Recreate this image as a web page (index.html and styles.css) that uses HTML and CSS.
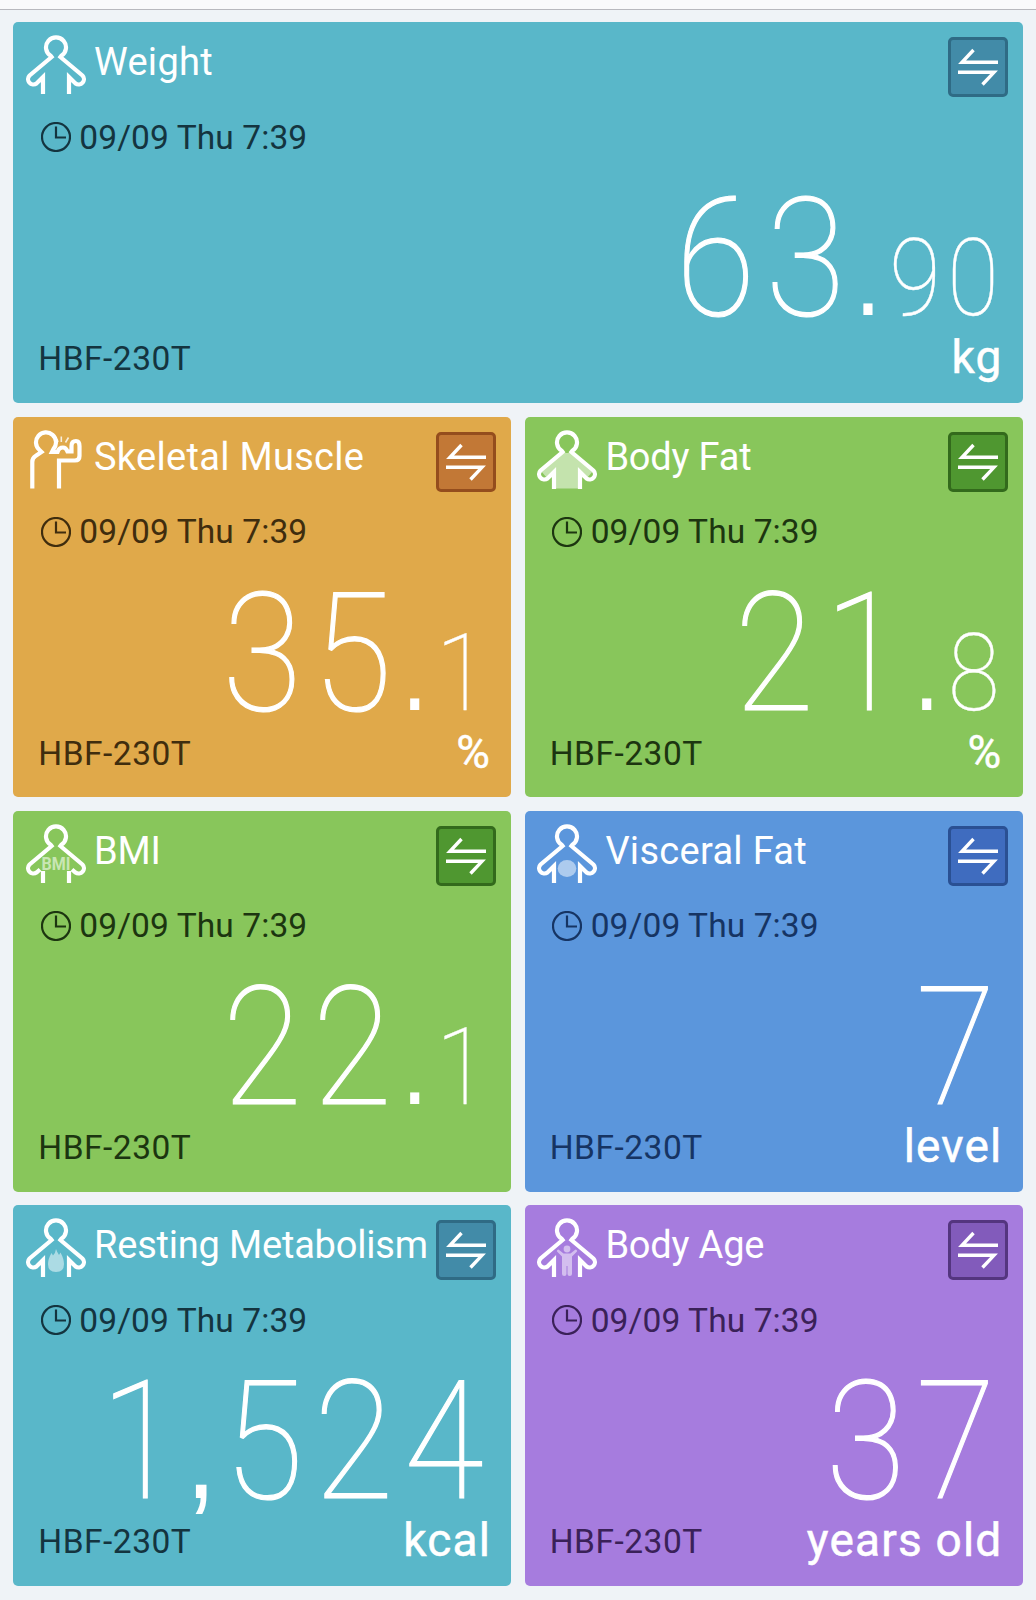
FILE: index.html
```html
<!DOCTYPE html>
<html lang="en">
<head>
    <meta charset="UTF-8">
    <meta name="viewport" content="width=device-width, initial-scale=1.0">
    <title>Body Composition</title>
    <link rel="stylesheet" href="styles.css">
</head>
<body>

    <!-- Shared icons -->
    <svg class="sprite" width="0" height="0">
        <symbol id="person" viewBox="0 0 60 60">
            <path d="M17 59V42L10.5 48.5A5.300 5.300 0 0 1 3.600 40.500L25.600 22L24.700 20.800A10 10 0 1 1 35.300 20.800L34.400 22L56.400 40.500A5.300 5.300 0 0 1 49.500 48.500L43 42V59"/>
        </symbol>
        <symbol id="swap" viewBox="0 0 60 60">
            <path d="M50 25.300H14L25.500 13M10 35.300H46L34.500 47.500"/>
        </symbol>
        <symbol id="clock" viewBox="0 0 30 30">
            <circle cx="15" cy="15" r="14"/>
            <path d="M15 4.500V15.500H25"/>
        </symbol>
    </svg>

    <div class="topbar"></div>

    <div class="cards">
        <!-- Weight -->
        <div class="card wide teal">
            <div class="head">
                <svg class="icon"><use href="#person"/></svg>
                <h2>Weight</h2>
                <button class="swap"><svg><use href="#swap"/></svg></button>
            </div>
            <div class="date"><svg><use href="#clock"/></svg><span>09/09 Thu 7:39</span></div>
            <div class="value">63<span class="dot">.</span><small>90</small></div>
            <div class="foot"><span class="device">HBF-230T</span><span class="unit">kg</span></div>
        </div>

        <!-- Skeletal Muscle -->
        <div class="card orange">
            <div class="head">
                <svg class="icon" viewBox="0 0 60 60">
                    <path d="M6.300 58.500V32Q6.300 28 9.500 26L15.500 22L13.500 20A10 10 0 1 1 27.500 19L26 22H31.500Q33 17.500 37 17.500Q40 17.500 41.500 21.500H45.500V16Q45.500 11 50 11Q53.500 11 53.500 16V26Q53.500 30.500 49 30.500H33V58.500"/>
                    <path class="spark" d="M35.300 6.500V12M42.500 7.500L39.500 12.500M31 9L32 12"/>
                </svg>
                <h2>Skeletal Muscle</h2>
                <button class="swap"><svg><use href="#swap"/></svg></button>
            </div>
            <div class="date"><svg><use href="#clock"/></svg><span>09/09 Thu 7:39</span></div>
            <div class="value">35<span class="dot">.</span><small>1</small></div>
            <div class="foot"><span class="device">HBF-230T</span><span class="unit">%</span></div>
        </div>

        <!-- Body Fat -->
        <div class="card green">
            <div class="head">
                <svg class="icon" viewBox="0 0 60 60">
                    <path class="tint" d="M25 23H35L56 41L50 48L43 42V58.500H17V42L10 48L4 41Z"/>
                    <use href="#person"/>
                </svg>
                <h2 class="tight">Body Fat</h2>
                <button class="swap"><svg><use href="#swap"/></svg></button>
            </div>
            <div class="date"><svg><use href="#clock"/></svg><span>09/09 Thu 7:39</span></div>
            <div class="value">21<span class="dot">.</span><small>8</small></div>
            <div class="foot"><span class="device">HBF-230T</span><span class="unit">%</span></div>
        </div>

        <!-- BMI -->
        <div class="card green">
            <div class="head">
                <svg class="icon" viewBox="0 0 60 60">
                    <path d="M14 45.500L10.500 48.500A5.300 5.300 0 0 1 3.600 40.500L25.600 22L24.700 20.800A10 10 0 1 1 35.300 20.800L34.400 22L56.400 40.500A5.300 5.300 0 0 1 49.500 48.500L46 45.500M17 47V59M43 47V59"/>
                    <text class="bmi" x="15.500" y="45.500" textLength="29" lengthAdjust="spacingAndGlyphs">BMI</text>
                </svg>
                <h2 class="tight">BMI</h2>
                <button class="swap"><svg><use href="#swap"/></svg></button>
            </div>
            <div class="date"><svg><use href="#clock"/></svg><span>09/09 Thu 7:39</span></div>
            <div class="value">22<span class="dot">.</span><small>1</small></div>
            <div class="foot"><span class="device">HBF-230T</span></div>
        </div>

        <!-- Visceral Fat -->
        <div class="card blue">
            <div class="head">
                <svg class="icon" viewBox="0 0 60 60">
                    <use href="#person"/>
                    <ellipse class="tint" cx="30" cy="44.500" rx="9.300" ry="8.500"/>
                </svg>
                <h2>Visceral Fat</h2>
                <button class="swap"><svg><use href="#swap"/></svg></button>
            </div>
            <div class="date"><svg><use href="#clock"/></svg><span>09/09 Thu 7:39</span></div>
            <div class="value">7</div>
            <div class="foot"><span class="device">HBF-230T</span><span class="unit">level</span></div>
        </div>

        <!-- Resting Metabolism -->
        <div class="card teal">
            <div class="head">
                <svg class="icon" viewBox="0 0 60 60">
                    <use href="#person"/>
                    <path class="tint" d="M30 31Q31 34 33 37L34.500 34.500Q38 41 38 46Q38 54 30 54Q22 54 22 46Q22 41 25.500 35L27 37.500Q29.500 35 30 31Z"/>
                </svg>
                <h2 class="tight">Resting Metabolism</h2>
                <button class="swap"><svg><use href="#swap"/></svg></button>
            </div>
            <div class="date"><svg><use href="#clock"/></svg><span>09/09 Thu 7:39</span></div>
            <div class="value">1<span class="dot comma">,</span>524</div>
            <div class="foot"><span class="device">HBF-230T</span><span class="unit">kcal</span></div>
        </div>

        <!-- Body Age -->
        <div class="card purple">
            <div class="head">
                <svg class="icon" viewBox="0 0 60 60">
                    <use href="#person"/>
                    <circle class="tint" cx="30" cy="31" r="3.400"/>
                    <path class="tint" d="M21.500 31.500L26.500 35.500H33.500L38.500 31.500Q40.500 32 40 33.500L35 38.500V56Q35 58 32.700 58Q30.500 58 30.500 56V48H29.500V56Q29.500 58 27.300 58Q25 58 25 56V38.500L20 33.500Q19.500 32 21.500 31.500Z"/>
                </svg>
                <h2 class="tight">Body Age</h2>
                <button class="swap"><svg><use href="#swap"/></svg></button>
            </div>
            <div class="date"><svg><use href="#clock"/></svg><span>09/09 Thu 7:39</span></div>
            <div class="value">37</div>
            <div class="foot"><span class="device">HBF-230T</span><span class="unit">years old</span></div>
        </div>
    </div>

</body>
</html>
```
FILE: styles.css
```css
* {
    box-sizing: border-box;
}
body {
    font-family: Roboto, "Liberation Sans", sans-serif;
    margin: 0;
    background-color: #eff3f7;
    color: #fff;
}
.sprite {
    display: block;
}
.topbar {
    height: 10px;
    background: #fafafb;
    border-bottom: 1px solid #b9b9be;
}
.cards {
    display: grid;
    grid-template-columns: repeat(2, minmax(0, 1fr));
    grid-auto-rows: 380.7px;
    gap: 13.6px;
    padding: 12.4px 13.5px 12.5px 13.3px;
}
.card {
    display: flex;
    flex-direction: column;
    border-radius: 5px;
    background: var(--bg);
}
.wide {
    grid-column: span 2;
}

/* Card colours */
.teal {
    --bg: #59b7c9;
    --btn: #428ba8;
    --edge: #2f6b85;
    --ink: #14343f;
}
.orange {
    --bg: #e0a94a;
    --btn: #c27836;
    --edge: #944d1d;
    --ink: #3f2d0e;
}
.green {
    --bg: #88c65b;
    --btn: #4f9730;
    --edge: #336a1c;
    --ink: #1c3510;
}
.blue {
    --bg: #5b96dc;
    --btn: #3f6cbf;
    --edge: #2a5093;
    --ink: #163463;
}
.purple {
    --bg: #a67cde;
    --btn: #825bbb;
    --edge: #54357f;
    --ink: #3a2158;
}

/* Card header */
.head {
    display: flex;
    height: 85px;
    padding: 13px 15px 0 12.7px;
}
.icon {
    width: 60px;
    height: 60px;
    flex: none;
    fill: none;
    stroke: #fff;
    stroke-width: 4.2;
}
.icon .tint {
    fill: rgba(255, 255, 255, 0.5);
    stroke: none;
}
.icon .spark {
    stroke-width: 1.6;
    opacity: 0.8;
}
.icon .bmi {
    font-size: 18px;
    font-weight: 700;
    fill: #c9e6b4;
    stroke: none;
}
.head h2 {
    margin: 5px 0 0 8px;
    font-size: 38px;
    line-height: 44px;
    font-weight: 400;
    letter-spacing: 0.3px;
    white-space: nowrap;
}
.head h2.tight {
    letter-spacing: -0.2px;
}
.swap {
    flex: none;
    width: 60px;
    height: 60px;
    margin: 2px 0 0 auto;
    padding: 0;
    background: var(--btn);
    border: 3px solid var(--edge);
    border-radius: 5px;
}
.swap svg {
    display: block;
    width: 60px;
    height: 60px;
    margin: -3px;
    fill: none;
    stroke: #fff;
    stroke-width: 3.4;
}

/* Measured at */
.date {
    display: flex;
    align-items: center;
    height: 60px;
    padding-left: 27.5px;
    color: var(--ink);
    font-size: 33.5px;
    letter-spacing: 0.1px;
}
.date svg {
    width: 30px;
    height: 30px;
    margin-right: 8.5px;
    fill: none;
    stroke: var(--ink);
    stroke-width: 2.2;
}

/* Reading: digits are condensed a little and spaced out */
.value {
    height: 165px;
    padding-right: 19px;
    text-align: right;
    font-size: 165px;
    line-height: 184px;
    font-weight: 100;
    letter-spacing: 12px;
    white-space: nowrap;
    transform: scaleX(0.88);
    transform-origin: right;
    -webkit-text-stroke: 1.2px #fff;
}
.value small {
    font-size: 107px;
    letter-spacing: 7.5px;
    -webkit-text-stroke: 0.4px #fff;
}
.dot {
    display: inline-block;
    width: 38px;
    font-family: "Liberation Sans", sans-serif;
    font-size: 108px;
    font-weight: 400;
    line-height: 1;
    letter-spacing: 0;
    text-align: center;
    text-indent: -10px;
    -webkit-text-stroke: 0;
}
.comma {
    font-size: 125px;
    text-indent: -14px;
}
.foot {
    display: flex;
    justify-content: space-between;
    align-items: flex-start;
    padding: 0 20px 0 25px;
    line-height: 54px;
}
.device {
    color: var(--ink);
    font-size: 33.5px;
    letter-spacing: 0.5px;
}
.unit {
    margin-top: -2px;
    font-size: 46px;
    letter-spacing: 1.2px;
    -webkit-text-stroke: 0.5px #fff;
}
```
